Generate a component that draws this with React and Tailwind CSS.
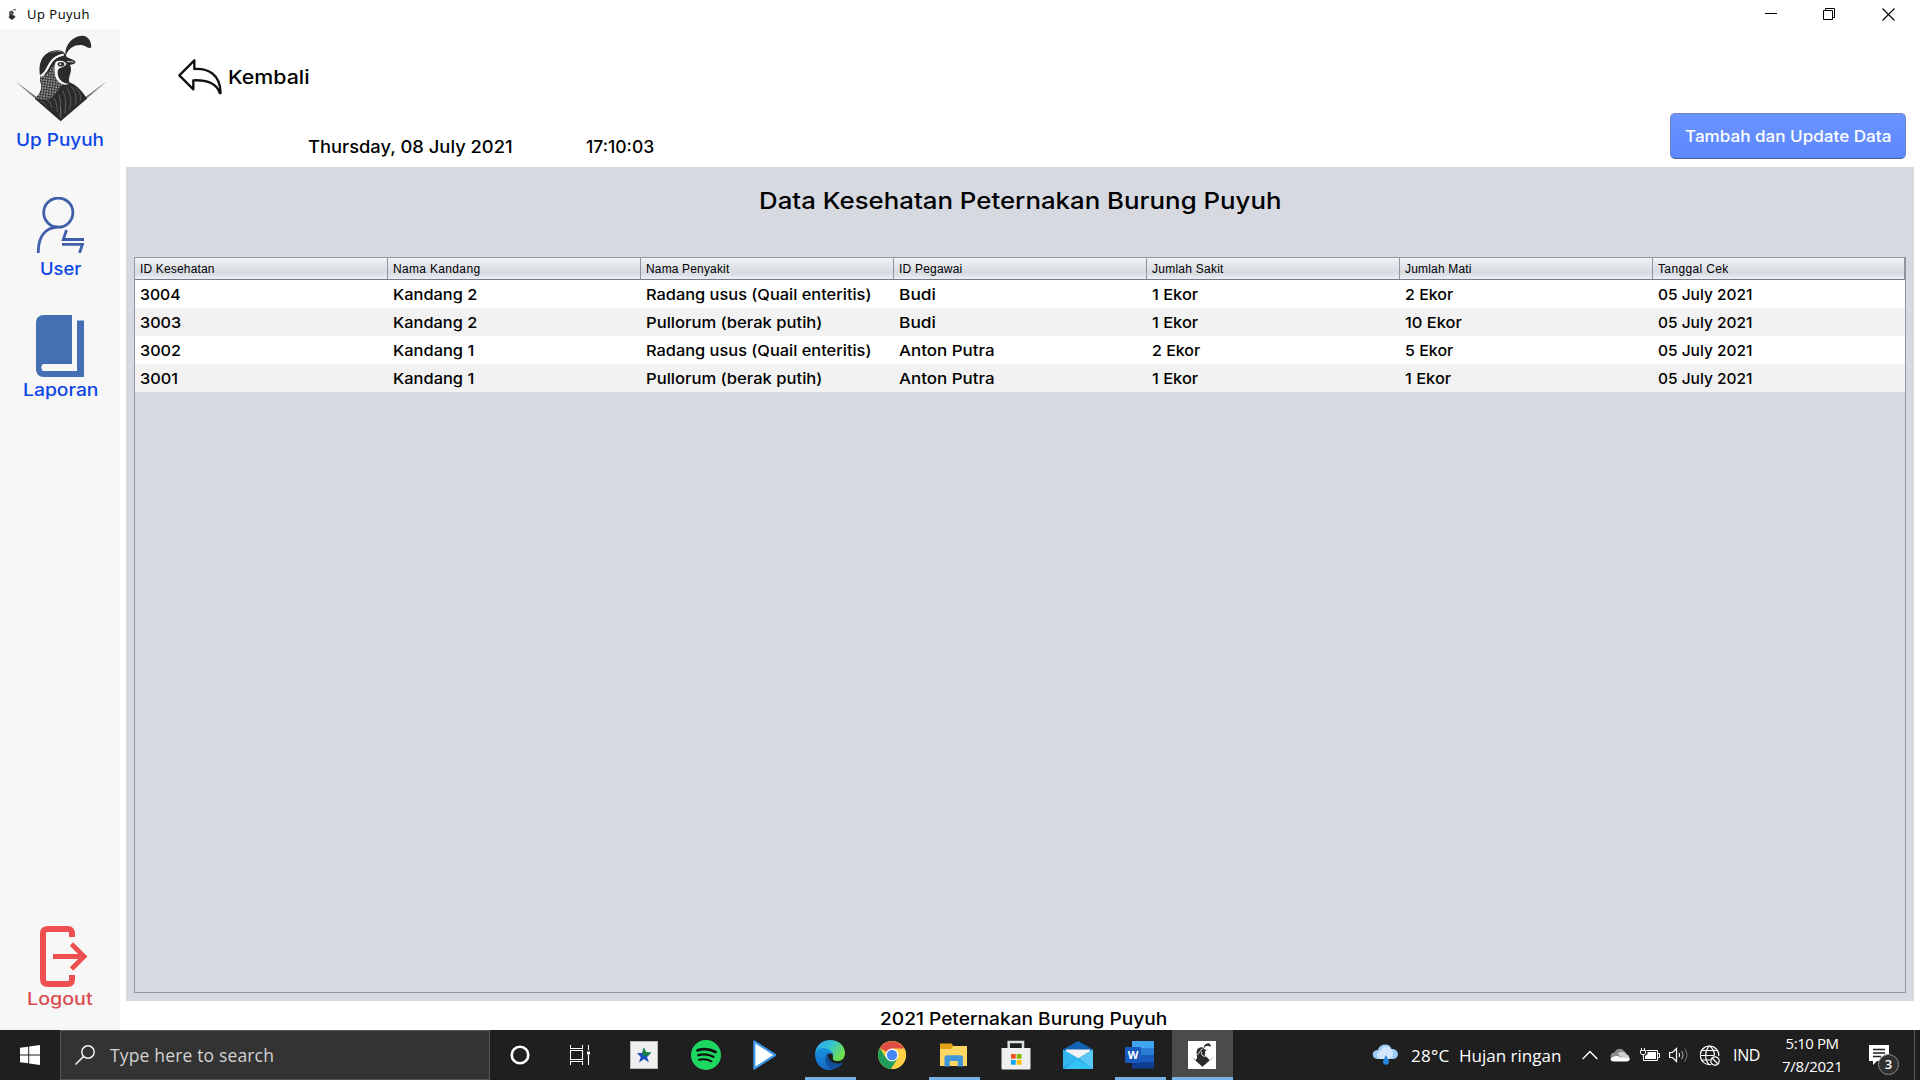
import { useLayoutEffect, useRef, useState } from "react";

// Text that is stretched horizontally, or tracked, so that it spans an exact width.
function Fit({ w, className = "", stretch, children }) {
  const ref = useRef(null);
  const [style, setStyle] = useState({});
  useLayoutEffect(() => {
    const natural = ref.current.offsetWidth;
    const n = ref.current.textContent.length;
    setStyle(stretch ? { transform: `scaleX(${w / natural})` } : { letterSpacing: (w - natural) / n + "px" });
  }, [w, stretch]);
  return (
    <span className={"inline-block shrink-0 text-left " + className} style={{ width: w }}>
      <span ref={ref} className="inline-block origin-left whitespace-pre" style={style}>{children}</span>
    </span>
  );
}

function Bird({ className, plain }) {
  return (
    <svg viewBox="45 104 276 262" className={className}>
      <defs>
        <pattern id="scales" width="8" height="8" patternUnits="userSpaceOnUse" patternTransform="rotate(8)">
          <rect width="8" height="8" fill="#383838" />
          <circle cx="3" cy="3" r="2.2" fill="#dadada" />
        </pattern>
      </defs>
      <path d="M45 243L110 291L106 296Z M321 243L256 291L260 296Z" fill="#777" />
      <path d="M196 162C196 132 218 107 246 106C264 105 276 124 274 142C262 146 257 134 244 134C222 133 207 143 198 164Z" fill="#2b2b2b" />
      <path d="M120 226C113 184 130 153 170 150C186 148 196 157 200 170L222 180C229 184 228 190 218 192L210 194C220 213 203 228 208 246C220 250 240 262 257 289L262 295L182 364L104 296C123 279 128 260 120 244Z" fill="#2b2b2b" />
      {plain ? (
        <path d="M124 234C150 218 157 178 184 164M172 198C165 222 182 248 206 253" stroke="#fff" strokeWidth="10" fill="none" />
      ) : (
        <>
          <path d="M121 233C135 228 146 216 156 199L172 188C163 211 168 238 190 252C174 262 172 282 150 295C135 300 118 300 106 294C125 278 129 256 121 244Z" fill="url(#scales)" />
          <path d="M121 228C137 222 142 204 150 190C158 176 172 166 191 163" stroke="#f7f7f7" strokeWidth="7" fill="none" />
          <path d="M135 221C148 212 151 194 162 183C171 173 182 172 193 169" stroke="#2b2b2b" strokeWidth="3" fill="none" />
          <path d="M168 184C180 180 192 180 200 191C188 207 174 197 173 216C173 236 186 249 207 251C187 260 166 244 164 218C163 204 163 192 168 184Z" fill="#f7f7f7" />
          <ellipse cx="183" cy="192" rx="10" ry="7" fill="#2b2b2b" />
          <circle cx="181" cy="192" r="3" fill="#ddd" />
          <path d="M201 184L222 185" stroke="#ccc" strokeWidth="3" />
          <path d="M154 158C164 152 174 151 184 154" stroke="#aaa" strokeWidth="2" fill="none" />
          <g stroke="#777" strokeWidth="2" fill="none">
            <path d="M122 303C130 306 136 311 139 318M140 299C149 303 154 312 156 324M158 292C168 300 171 316 172 336M176 284C183 300 184 322 180 346M188 272C197 290 200 312 194 340M200 262C211 278 216 300 209 328M213 259C226 272 232 292 226 314M225 262C238 274 246 288 241 302M180 318C184 330 184 342 182 354" />
          </g>
        </>
      )}
    </svg>
  );
}

const HEADERS = [
  ["ID Kesehatan", 75], ["Nama Kandang", 87], ["Nama Penyakit", 83], ["ID Pegawai", 63],
  ["Jumlah Sakit", 72], ["Jumlah Mati", 67], ["Tanggal Cek", 71],
];
const ROWS = [
  [["3004", 41], ["Kandang 2", 84], ["Radang usus (Quail enteritis)", 226], ["Budi", 37], ["1 Ekor", 46], ["2 Ekor", 48], ["05 July 2021", 95]],
  [["3003", 41], ["Kandang 2", 84], ["Pullorum (berak putih)", 177], ["Budi", 37], ["1 Ekor", 46], ["10 Ekor", 57], ["05 July 2021", 95]],
  [["3002", 41], ["Kandang 1", 81], ["Radang usus (Quail enteritis)", 226], ["Anton Putra", 96], ["2 Ekor", 48], ["5 Ekor", 48], ["05 July 2021", 95]],
  [["3001", 38], ["Kandang 1", 81], ["Pullorum (berak putih)", 177], ["Anton Putra", 96], ["1 Ekor", 46], ["1 Ekor", 46], ["05 July 2021", 95]],
];

function TitleBar() {
  return (
    <div className="flex h-[29px] items-center bg-white pl-1.5 font-['Open_Sans','Noto_Sans',sans-serif]">
      <Bird plain className="h-[17px] w-3" />
      <Fit w={63} className="-mt-px ml-[9px] text-[13px] leading-5 text-black">Up Puyuh</Fit>
      <div className="ml-auto mr-[25px] flex items-center gap-[46px]">
        <svg className="-mr-px h-[13px] w-[13px]" viewBox="0 0 13 13"><path d="M0 5.5H12" stroke="#000" /></svg>
        <svg className="h-[13px] w-[13px]" viewBox="0 0 13 13" fill="none" stroke="#000"><path d="M.5 2.5H9.5V11.5H.5ZM2.5 2.5V.5H11.5V9.5H9.5" /></svg>
        <svg className="h-[13px] w-[13px]" viewBox="0 0 13 13"><path d="M.5 .5L12.5 12.5M12.5 .5L.5 12.5" stroke="#000" strokeWidth="1.1" /></svg>
      </div>
    </div>
  );
}

function Sidebar() {
  return (
    <div className="flex w-[120px] shrink-0 flex-col items-center bg-[#f7f7f7] pt-1.5 text-[17px] font-medium leading-6 text-[#0d45e6]">
      <Bird className="ml-0.5 h-[87px] w-[92px]" />
      <Fit stretch w={88} className="mt-1.5">Up Puyuh</Fit>
      <svg className="mt-[45px] h-14 w-12" viewBox="0 0 48 56" fill="none" stroke="#3f5fa8" strokeWidth="2.8">
        <circle cx="22.3" cy="15.6" r="14.6" />
        <path d="M2.3 56C2 40 9 31 21 30M30.500 33L27.300 42.500H48M26 47.300H46.500L43.500 56" />
      </svg>
      <Fit stretch w={41} className="mt-1">User</Fit>
      <svg className="mt-[34px] h-[62px] w-12" viewBox="0 0 48 62">
        <path d="M8 0H36V49H8C4.500 49 4.500 56 8 56H41V5.500H48V62H8C3 62 0 59 0 54V8C0 3 3 0 8 0Z" fill="#4470b3" />
      </svg>
      <Fit stretch w={75} className="mt-px">Laporan</Fit>
      <svg className="mt-auto ml-2 h-[61px] w-12" viewBox="0 0 48 61" fill="none" stroke="#ee5052">
        <path d="M32 11V7C32 4.500 30.500 3 28 3H8C4.500 3 3 4.500 3 8V53C3 56.500 4.500 58 8 58H28C30.500 58 32 56.500 32 54V49" strokeWidth="6" />
        <path d="M13 30.500H43M31.500 18L44 30.500L31.500 43" strokeWidth="4.800" />
      </svg>
      <Fit stretch w={66} className="mb-[19px] text-[#dc4b52]">Logout</Fit>
    </div>
  );
}

function TopArea() {
  return (
    <div className="flex h-[138px] justify-between pr-3.5">
      <div className="flex flex-col">
        <div className="flex items-start pl-[58px] pt-[29px]">
          <svg className="h-[38px] w-[46px]" viewBox="534 174 138 114" fill="none" stroke="#111" strokeWidth="7" strokeLinejoin="round">
            <path d="M538 226L583 181V207C624 205 660 221 662 279H659C651 251 620 239 580 241V268Z" />
          </svg>
          <Fit stretch w={82} className="ml-1 mt-2 text-[19px] font-medium leading-6">Kembali</Fit>
        </div>
        <div className="flex gap-[73px] pl-[188px] pt-[39px] text-[17px] font-medium leading-6">
          <Fit stretch w={205}>Thursday, 08 July 2021</Fit>
          <Fit stretch w={68}>17:10:03</Fit>
        </div>
      </div>
      <button className="mt-[84px] flex h-[46px] w-[236px] items-center justify-center rounded-[5px] border border-[#6f86c4] border-b-[#4a5a91] bg-linear-to-b from-[#6b93ff] to-[#5c88ff] text-[16px] font-medium text-white">
        <Fit stretch w={206}>Tambah dan Update Data</Fit>
      </button>
    </div>
  );
}

function DataTable() {
  return (
    <div className="mx-2 mb-2 flex flex-1 flex-col border border-[#9297a1]">
      <div className="flex h-[22px] border-b border-[#777c86] bg-linear-to-b from-[#f2f3f6] via-[#d6d9e0] via-70% to-[#eceff6] font-['Liberation_Sans',sans-serif] text-[12px] leading-[23px]">
        {HEADERS.map(([t, w]) => (
          <div key={t} className="h-[21px] w-[253px] shrink-0 border-r border-[#8f949e] pl-[5px] last:w-[252px]">
            <Fit w={w}>{t}</Fit>
          </div>
        ))}
      </div>
      {ROWS.map((row, i) => (
        <div key={i} className="flex h-7 bg-white text-[15px] font-medium leading-[30px] odd:bg-[#f2f2f2]">
          {row.map(([t, w], j) => (
            <div key={j} className="w-[253px] shrink-0 pl-[5px] last:w-[252px]"><Fit stretch w={w}>{t}</Fit></div>
          ))}
        </div>
      ))}
    </div>
  );
}

function Slot({ w, active, open, children }) {
  return (
    <div className="relative flex h-full shrink-0 items-center justify-center" style={{ width: w }}>
      {active && <div className="absolute inset-0 bg-[#4b4b4b]" />}
      <div className="relative flex">{children}</div>
      {open && <div className={"absolute bottom-0 h-[3px] bg-[#76b2e6] " + (active ? "w-full" : "w-[51px]")} />}
    </div>
  );
}

const ICON = "h-[30px] w-[30px]";

function Taskbar() {
  return (
    <div className="flex h-[50px] shrink-0 bg-[#1f1f1f] font-['Open_Sans','Noto_Sans',sans-serif] text-white">
      <div className="flex w-[60px] items-center justify-center">
        <svg className="h-5 w-5" viewBox="0 0 20 20" fill="#fff"><path d="M0 2.800L8.200 1.700V9.500H0ZM9.200 1.500L20 0V9.500H9.200ZM0 10.500H8.200V18.300L0 17.200ZM9.200 10.500H20V20L9.200 18.500Z" /></svg>
      </div>
      <div className="flex w-[430px] items-center border border-[#565656] bg-[#333] pl-3.5">
        <svg className="h-5 w-5" viewBox="0 0 20 20" fill="none" stroke="#f0f0f0" strokeWidth="1.500"><circle cx="13" cy="7" r="6.200" /><path d="M8.600 11.400L.5 19.500" /></svg>
        <Fit w={164} className="ml-[15px] text-[17.500px] leading-6 text-[#d2d2d2]">Type here to search</Fit>
      </div>
      <div className="flex items-center">
        <Slot w={60}><svg className="h-5 w-5" viewBox="0 0 20 20"><circle cx="10" cy="10" r="8.300" fill="none" stroke="#fff" strokeWidth="2.600" /></svg></Slot>
        <Slot w={60}>
          <svg className="h-5 w-5" viewBox="0 0 20 20" fill="none" stroke="#fff" strokeWidth="1.100">
            <path d="M.5 0V3.500H12.500V0M.5 5.500H12.500V14.500H.5ZM.5 20V16.500H12.500V20M18.500 0V5M18.500 10V20" /><rect x="17" y="6.500" width="3" height="3" fill="#fff" stroke="none" />
          </svg>
        </Slot>
        <Slot w={68}>
          <svg className="h-7 w-7" viewBox="0 0 28 28">
            <rect width="28" height="28" fill="#b9b9b9" /><rect x="1" y="1" width="26" height="26" fill="#efefef" />
            <path d="M7 12H12L14 7L16 12H21L17 16L19 21.500L14 18L9 21.500L10.700 16Z" fill="#1c4fc0" />
            <path d="M12.800 9L14 6.500L16 11L21.500 11.500L18 14.500L13 15Z" fill="#17843b" />
          </svg>
        </Slot>
        <Slot w={56}>
          <svg className={ICON} viewBox="0 0 30 30" fill="none" stroke="#111" strokeLinecap="round"><circle cx="15" cy="15" r="15" fill="#1ed760" stroke="none" /><path d="M6.500 10.300C12.500 8.500 19.500 9.200 24.500 12" strokeWidth="2.800" /><path d="M7.300 15.200C12.500 13.700 18 14.300 22.300 16.800" strokeWidth="2.300" /><path d="M7.800 19.800C12 18.700 16.500 19.100 20.500 21.300" strokeWidth="1.900" /></svg>
        </Slot>
        <Slot w={62}>
          <svg className={ICON} viewBox="0 0 30 30"><path d="M4.300 1.500L25.200 15L4.300 28.500Z" fill="#fff" stroke="#3d96e8" strokeWidth="2.200" strokeLinejoin="round" /></svg>
        </Slot>
        <Slot w={68} open>
          <svg className={ICON} viewBox="0 0 30 30">
            <defs>
              <linearGradient id="eg" x1="0" y1="0" x2="1" y2=".5"><stop offset="0" stopColor="#2c9ee8" /><stop offset=".5" stopColor="#35c1d5" /><stop offset="1" stopColor="#6ee04b" /></linearGradient>
              <linearGradient id="eb" x1="0" y1="0" x2="0" y2="1"><stop offset="0" stopColor="#1596df" /><stop offset="1" stopColor="#1668c4" /></linearGradient>
            </defs>
            <path d="M0 14C1 5 7 0 15 0C25 0 30 7 30 13C30 18 27 21 23 21C19 21 17 19.500 18 17C19 12 13 9 9 10C4 10 1 12 0 14Z" fill="url(#eg)" />
            <path d="M0 14C1 9 6 7 11 8.500C15 9.500 18 12 18 15C15 11 10 15 11 21C12 26 16 29.500 19 29.500C9 32 0 26 0 14Z" fill="url(#eb)" />
            <path d="M12 14C9 17 10 24 14 28C19 31 26 27 28 22.500C24 24.500 16 24 13.500 18C12.500 16 13 14 14 13Z" fill="#124f9c" />
          </svg>
        </Slot>
        <Slot w={56}>
          <svg className="h-7 w-7" viewBox="0 0 28 28">
            <circle cx="14" cy="14" r="14" fill="#ffcf44" />
            <path d="M14 14L1.900 7A14 14 0 0 1 26.100 7.500Z" fill="#dd4d41" />
            <path d="M1.900 7A14 14 0 0 0 13 28L20 17L14 14L8 17Z" fill="#1f9d5a" />
            <path d="M20 17.500L13 28A14 14 0 0 0 26.300 7.500H14Z" fill="#ffcf44" />
            <circle cx="14" cy="14" r="6.500" fill="#fff" /><circle cx="14" cy="14" r="5.200" fill="#4587f3" />
          </svg>
        </Slot>
        <Slot w={68} open>
          <svg className={ICON} viewBox="0 0 30 30">
            <path d="M1 3.500H12.500L14.500 6H28V12H1Z" fill="#e3a116" /><path d="M1 9H12L14.500 6H28V26H1Z" fill="#ffd763" />
            <path d="M5.500 26.500V18C5.500 16 6.500 15.300 8 15.300H21C23 15.300 24 16.300 24 18V26.500H18.800V21H10.700V26.500Z" fill="#3f97d8" />
          </svg>
        </Slot>
        <Slot w={56}>
          <svg className={ICON} viewBox="0 0 30 30">
            <path d="M7.700 9V2H22V9" fill="none" stroke="#dce3dd" strokeWidth="2.500" /><path d="M.5 8H29.500V28C29.500 29 29 29.500 28 29.500H2C1 29.500 .5 29 .5 28Z" fill="#efefef" />
            <path d="M10 14H14.700V18.700H10Z" fill="#f25022" /><path d="M15.700 14H20.500V18.700H15.700Z" fill="#7fba00" /><path d="M10 20H14.700V24.700H10Z" fill="#00a4ef" /><path d="M15.700 20H20.500V24.700H15.700Z" fill="#ffb900" />
          </svg>
        </Slot>
        <Slot w={68}>
          <svg className={ICON} viewBox="0 0 30 30">
            <path d="M0 9.500L14 1.500C15 1 15.500 1 16 1.500L30 9.500V15H0Z" fill="#1363b5" /><path d="M3 9.500H27V22H3Z" fill="#f3f3f3" />
            <path d="M0 9.500L17 19L0 29Z" fill="#35b7ee" /><path d="M30 9.500L0 27.500V29H30Z" fill="#1f9de6" /><path d="M14 19L30 29H1Z" fill="#35c2f5" /><path d="M30 9.500V29L15.500 18.500Z" fill="#5ac8f5" />
          </svg>
        </Slot>
        <Slot w={56} open>
          <svg className={ICON} viewBox="0 0 30 30">
            <path d="M7 1H29V8H7Z" fill="#41a5ee" /><path d="M7 8H29V15H7Z" fill="#2b7cd3" /><path d="M7 15H29V22H7Z" fill="#185abd" /><path d="M7 22H29V28.500H7Z" fill="#103f91" /><rect y="7" width="16" height="16" rx="1" fill="#185abd" />
            <text x="8" y="19" textAnchor="middle" fontFamily="Open Sans" fontWeight="700" fontSize="11" fill="#fff">W</text>
          </svg>
        </Slot>
        <div className="ml-1 h-full"><Slot w={61} active open><span className="mr-px flex h-7 w-7 items-center justify-center bg-white"><Bird plain className="h-[24px] w-[25px]" /></span></Slot></div>
      </div>

      <div className="ml-auto flex h-full items-center">
        <svg className="h-6 w-[27px]" viewBox="0 0 27 24">
          <path d="M6 16C-1 16-1 7 6 7C8 0 18 0 19.500 6C27 5 29 16 20 16Z" fill="#9ccbf5" /><path d="M8 16C3 14 5 8 9 8C10 3 16 2 19 6C22 8 22 14 17 16Z" fill="#d2e7fb" /><path d="M14 12C12 16 11 17 11 19C11 22.500 17 22.500 17 19C17 17 15.500 15 14 12Z" fill="#2a86da" />
        </svg>
        <Fit w={38} className="ml-3 mt-0.5 text-[17px] leading-6">28°C</Fit>
        <Fit w={102} className="ml-2.5 mr-px mt-0.5 text-[17px] leading-6">Hujan ringan</Fit>
        <svg className="ml-5 h-2.5 w-4" viewBox="0 0 16 10"><path d="M.7 9L8 1.500L15.300 9" stroke="#fff" strokeWidth="1.400" fill="none" /></svg>
        <svg className="ml-3 h-3.5 w-5" viewBox="0 0 20 14">
          <path d="M.5 9.500C0 6.500 2 4.500 4.500 4.500C6 .5 11.500-.5 14 3C15.500 4 16 5 16.500 6L19 9.500Z" fill="#8b8b8b" />
          <path d="M8 6C10 2.500 15 3.500 16.500 6.500C19 7 19.500 9 19 10L12 10Z" fill="#cfcfcf" />
          <path d="M3.500 13.500C0 13.500-.5 9.500 3 9C5 7.500 8 7.500 10 9C13 10.500 17 9.500 19.500 10C20.500 12 18.500 13.500 17 13.500Z" fill="#fff" />
        </svg>
        <svg className="ml-2.5 h-3.5 w-5" viewBox="0 0 20 14" fill="none" stroke="#fff"><path d="M6.500 2.500H17.500V12.500H3.500V8.500M18 5.500H19.500V9.500H18M1.500 0V2.500M4.500 0V2.500M.5 2.500H5.500V5L4.500 6.500H1.500L.5 5ZM3.300 7V9" /><path d="M7.500 4H16V11H5V8L7.500 6Z" fill="#fff" stroke="none" /></svg>
        <svg className="ml-[9px] h-4 w-5" viewBox="0 0 20 16" fill="none" stroke="#fff" strokeWidth="1.200"><path d="M.6 5.500H3.500L7.500 1.500V14.500L3.500 10.500H.6Z" /><path d="M10 6Q11.300 8 10 10" /><path d="M12.500 4Q15.500 8 12.500 12" stroke="#999" /><path d="M15.500 1.500Q20.500 8 15.500 14.500" stroke="#666" /></svg>
        <svg className="ml-[11px] h-[21px] w-5" viewBox="0 0 20 21" fill="none" stroke="#fff" strokeWidth="1.200"><path d="M11 19.500A9.300 9.300 0 1 1 18.800 11M9.500 .8C4.500 6 4.500 15 9 19.500M9.500 .8C13.500 4 14.500 8 14.500 10.500M1 10.500H14M2.500 5.500H17M2.500 15H10" /><circle cx="15" cy="16" r="4.200" /><path d="M12 13L18 19" /></svg>
        <Fit w={27} className="ml-[13px] mr-px text-[16px] leading-6">IND</Fit>
        <div className="ml-[21px] flex w-[60px] flex-col items-center text-[15px] leading-[23px]">
          <Fit w={53}>5:10 PM</Fit>
          <Fit w={60}>7/8/2021</Fit>
        </div>
        <div className="relative ml-[27px] h-5 w-5">
          <svg className="h-5 w-5" viewBox="0 0 20 20"><path d="M0 0H20V16H8L4 20V16H0Z" fill="#fff" /><path d="M4 4.500H16M4 8H16M4 11.500H12" stroke="#222" strokeWidth="1.300" /></svg>
          <div className="absolute left-[9px] top-[9px] flex h-[21px] w-[21px] items-center justify-center rounded-full border border-[#8d8d8d] bg-[#303030] text-[13px] font-semibold leading-none">3</div>
        </div>
        <div className="ml-[25px] mr-[5px] h-full w-px bg-[#5a5a5a]" />
      </div>
    </div>
  );
}

export default function App() {
  return (
    <div className="flex h-[1080px] w-[1920px] flex-col overflow-hidden bg-white font-['Inter',sans-serif] text-black">
      <TitleBar />
      <div className="flex min-h-0 flex-1">
        <Sidebar />
        <div className="flex flex-1 flex-col">
          <TopArea />
          <div className="ml-1.5 mr-1.5 flex h-[834px] flex-col bg-[#d6d9e0]">
            <div className="flex h-[90px] justify-center pt-[18px] text-[23px] font-medium leading-8"><Fit stretch w={523}>Data Kesehatan Peternakan Burung Puyuh</Fit></div>
            <DataTable />
          </div>
          <div className="flex h-[29px] justify-center pt-1.5 pl-[6px] text-[17px] font-medium leading-6"><Fit stretch w={287}>2021 Peternakan Burung Puyuh</Fit></div>
        </div>
      </div>
      <Taskbar />
    </div>
  );
}
